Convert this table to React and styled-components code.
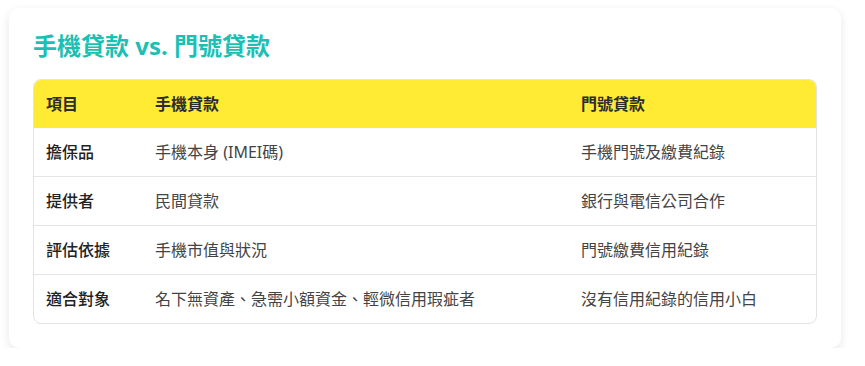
import React from 'react';
import styled, { createGlobalStyle } from 'styled-components';

const GlobalStyle = createGlobalStyle`
  body {
    margin: 0;
    background: #ffffff;
    font-family: "Noto Sans", "Noto Sans CJK TC", sans-serif;
  }
`;

const Page = styled.div`
  padding: 8px 24px 0 9px;
`;

const Card = styled.section`
  background: #ffffff;
  border-radius: 10px;
  box-shadow: 0 3px 10px rgba(0, 0, 0, 0.1);
  padding: 24px 24px 24px 24px;
`;

const Title = styled.h2`
  margin: 0 0 18px;
  font-size: 24px;
  line-height: 1.2;
  font-weight: 700;
  color: #1cbfb3;
`;

const TableWrap = styled.div`
  border: 1px solid #e3e3e3;
  border-radius: 8px;
  overflow: hidden;
`;

const Table = styled.table`
  width: 100%;
  border-collapse: collapse;
  table-layout: fixed;
  font-size: 16px;
  line-height: 24px;
`;

const HeadCell = styled.th`
  box-sizing: border-box;
  background: #ffeb33;
  color: #2b2b2b;
  font-size: 16px;
  font-weight: 700;
  text-align: left;
  padding: 12px;
  width: ${({ $w }) => $w || 'auto'};
`;

const Row = styled.tr`
  border-top: 1px solid #e5e5e5;
  &:first-child { border-top: none; }
`;

const Cell = styled.td`
  padding: 12px;
  color: ${({ $label }) => ($label ? '#222' : '#444')};
  font-weight: ${({ $label }) => ($label ? 500 : 400)};
`;

const rows = [
  ['擔保品', '手機本身 (IMEI碼)', '手機門號及繳費紀錄'],
  ['提供者', '民間貸款', '銀行與電信公司合作'],
  ['評估依據', '手機市值與狀況', '門號繳費信用紀錄'],
  ['適合對象', '名下無資產、急需小額資金、輕微信用瑕疵者', '沒有信用紀錄的信用小白'],
];

export default function App() {
  return (
    <Page>
      <GlobalStyle />
      <Card>
        <Title>手機貸款 vs. 門號貸款</Title>
        <TableWrap>
          <Table>
            <thead>
              <tr>
                <HeadCell $w="109px">項目</HeadCell>
                <HeadCell $w="426px">手機貸款</HeadCell>
                <HeadCell>門號貸款</HeadCell>
              </tr>
            </thead>
            <tbody>
              {rows.map((r) => (
                <Row key={r[0]}>
                  <Cell $label>{r[0]}</Cell>
                  <Cell>{r[1]}</Cell>
                  <Cell>{r[2]}</Cell>
                </Row>
              ))}
            </tbody>
          </Table>
        </TableWrap>
      </Card>
    </Page>
  );
}
